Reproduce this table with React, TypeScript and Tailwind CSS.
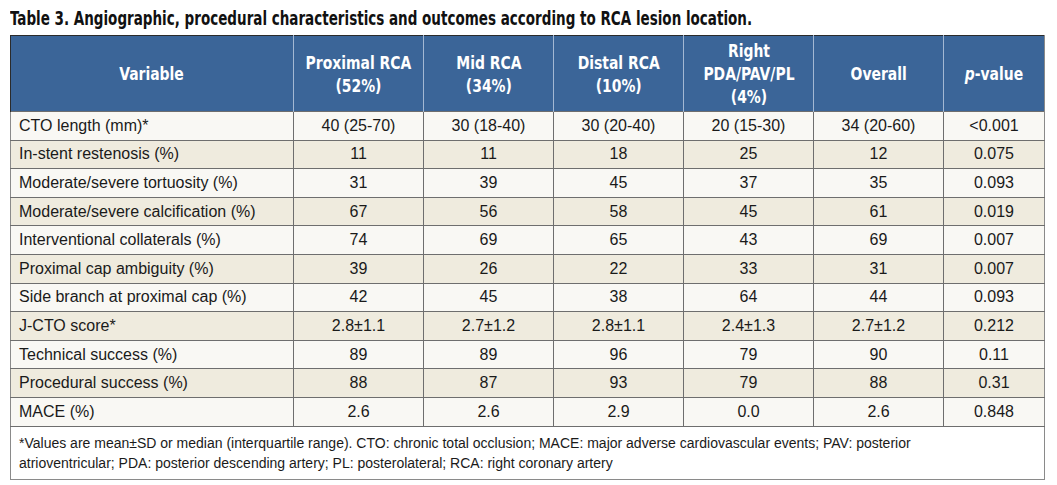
const rows: [string, string, string, string, string, string, string][] = [
  ['CTO length (mm)*', '40 (25-70)', '30 (18-40)', '30 (20-40)', '20 (15-30)', '34 (20-60)', '<0.001'],
  ['In-stent restenosis (%)', '11', '11', '18', '25', '12', '0.075'],
  ['Moderate/severe tortuosity (%)', '31', '39', '45', '37', '35', '0.093'],
  ['Moderate/severe calcification (%)', '67', '56', '58', '45', '61', '0.019'],
  ['Interventional collaterals (%)', '74', '69', '65', '43', '69', '0.007'],
  ['Proximal cap ambiguity (%)', '39', '26', '22', '33', '31', '0.007'],
  ['Side branch at proximal cap (%)', '42', '45', '38', '64', '44', '0.093'],
  ['J-CTO score*', '2.8±1.1', '2.7±1.2', '2.8±1.1', '2.4±1.3', '2.7±1.2', '0.212'],
  ['Technical success (%)', '89', '89', '96', '79', '90', '0.11'],
  ['Procedural success (%)', '88', '87', '93', '79', '88', '0.31'],
  ['MACE (%)', '2.6', '2.6', '2.9', '0.0', '2.6', '0.848'],
];

const condensed = "font-['Liberation_Sans_Narrow','DejaVu_Sans_Condensed','Liberation_Sans',sans-serif]";

// header label, squeezed to the narrow face of the printed table
function Head({ children }: { children: React.ReactNode }) {
  return <span className="inline-block scale-x-[0.86]">{children}</span>;
}

export default function App() {
  return (
    <div className="w-[1057px] h-[485px] bg-white pl-[10px] pt-[7px] font-['Liberation_Sans',Arial,sans-serif] text-[#1a1a1a]">
      <h1 className={`${condensed} w-max origin-left scale-x-[0.79] font-bold text-[19px] leading-[22px] text-[#111] mb-[6px]`}>
        Table 3. Angiographic, procedural characteristics and outcomes according to RCA lesion location.
      </h1>

      <table className="w-[1034px] table-fixed border-collapse text-[16px]">
        <colgroup>
          <col className="w-[283px]" />
          <col className="w-[130px]" />
          <col className="w-[130px]" />
          <col className="w-[130px]" />
          <col className="w-[130px]" />
          <col className="w-[130px]" />
          <col className="w-[101px]" />
        </colgroup>
        <thead>
          <tr className={`${condensed} h-[76px] bg-[#3b6598] text-white font-bold text-[18px] leading-[23px]`}>
            <th className="border-t border-l border-t-[#2b2b2b] border-l-[#2b2b2b] border-r border-r-[#a3b8d3] font-bold">
              <Head>Variable</Head>
            </th>
            <th className="border-t border-t-[#2b2b2b] border-r border-r-[#a3b8d3] font-bold">
              <Head>
                Proximal RCA<br />(52%)
              </Head>
            </th>
            <th className="border-t border-t-[#2b2b2b] border-r border-r-[#a3b8d3] font-bold">
              <Head>
                Mid RCA<br />(34%)
              </Head>
            </th>
            <th className="border-t border-t-[#2b2b2b] border-r border-r-[#a3b8d3] font-bold">
              <Head>
                Distal RCA<br />(10%)
              </Head>
            </th>
            <th className="border-t border-t-[#2b2b2b] border-r border-r-[#a3b8d3] font-bold">
              <Head>
                Right<br />PDA/PAV/PL<br />(4%)
              </Head>
            </th>
            <th className="border-t border-t-[#2b2b2b] border-r border-r-[#a3b8d3] font-bold">
              <Head>Overall</Head>
            </th>
            <th className="border-t border-t-[#2b2b2b] border-r border-r-[#8a8a8a] font-bold">
              <Head>
                <span className="italic">p</span>-value
              </Head>
            </th>
          </tr>
        </thead>
        <tbody>
          {rows.map((r, i) => (
            <tr key={r[0]} className={`h-[28.6px] ${i % 2 === 0 ? 'bg-[#f9f8f4]' : 'bg-[#efebde]'}`}>
              {r.map((c, j) => (
                <td
                  key={j}
                  className={`border border-[#6e6e6e] p-0 leading-[18px] ${j === 0 ? 'text-left pl-[8px] border-l-[#8a8a8a]' : 'text-center'} ${j === 6 ? 'border-r-[#8a8a8a]' : ''}`}
                >
                  {c}
                </td>
              ))}
            </tr>
          ))}
          <tr className="h-[53px] bg-white">
            <td colSpan={7} className="border border-[#8a8a8a] border-t-[#6e6e6e] pl-[8px] pr-2 text-[14px] leading-[20px] align-middle">
              *Values are mean±SD or median (interquartile range). CTO: chronic total occlusion; MACE: major adverse cardiovascular events; PAV: posterior
              <br />
              atrioventricular; PDA: posterior descending artery; PL: posterolateral; RCA: right coronary artery
            </td>
          </tr>
        </tbody>
      </table>
    </div>
  );
}
